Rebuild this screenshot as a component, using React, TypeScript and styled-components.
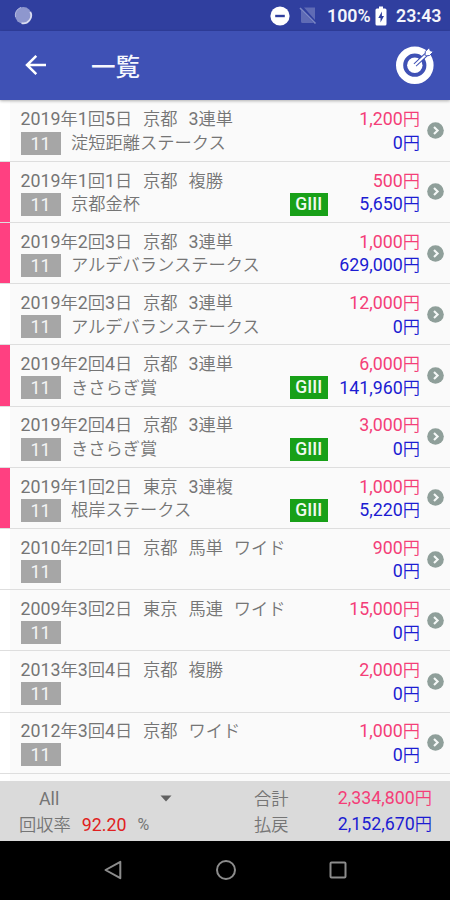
import React from 'react';
import styled, { createGlobalStyle } from 'styled-components';

const GlobalStyle = createGlobalStyle`
  * { box-sizing: border-box; }
  body { margin: 0; background: #000; }
`;

const Screen = styled.div`
  width: 450px;
  height: 900px;
  overflow: hidden;
  display: flex;
  flex-direction: column;
  background: #fafafa;
  font-family: Roboto, 'Noto Sans CJK JP', sans-serif;
  font-size: 17.8px;
  color: #757575;
`;

const StatusBar = styled.header`
  height: 30.5px;
  flex: none;
  display: flex;
  align-items: center;
  padding: 1px 10px 0 14px;
  background: #303f9f;
  color: #f4f5fb;
  font-size: 17.8px;
  font-weight: 600;
`;

const StatusIcons = styled.div`
  margin-left: auto;
  display: flex;
  align-items: center;
`;

const StatusText = styled.span<{ $width: number; $gap: number }>`
  width: ${(p) => p.$width}px;
  margin-left: ${(p) => p.$gap}px;
  white-space: nowrap;
`;

const Icon = styled.svg<{ $gap?: number }>`
  display: block;
  flex: none;
  margin-left: ${(p) => p.$gap ?? 0}px;
`;

const AppBar = styled.div`
  height: 69.7px;
  flex: none;
  display: flex;
  align-items: center;
  padding: 0 14px 0 25px;
  background: #3f51b5;
  box-shadow: 0 1px 3px rgba(0, 0, 0, 0.3);
  z-index: 1;
`;

const Title = styled.h1`
  margin: 0 auto 0 44px;
  padding-top: 5px;
  font-size: 24.5px;
  font-weight: 500;
  line-height: 30px;
  color: #f6f7fd;
`;

const List = styled.ul`
  flex: 1;
  min-height: 0;
  margin: 0;
  padding: 0.5px 0 0;
  list-style: none;
  overflow: hidden;
`;

const Row = styled.li`
  height: 61.2px;
  display: flex;
  align-items: center;
  padding-right: 6px;
  border-bottom: 1.5px solid #dedede;
`;

const HitMark = styled.span<{ $hit: boolean }>`
  width: 10px;
  flex: none;
  align-self: stretch;
  background: ${(p) => (p.$hit ? '#ff4081' : '#ffffff')};
`;

const Race = styled.div`
  flex: 1;
  padding: 7px 0 0 10.5px;
  align-self: stretch;
`;

const Line = styled.div`
  height: 23.6px;
  display: flex;
  align-items: center;
  white-space: pre;
  line-height: 23px;
`;

const Words = styled.span`
  display: flex;
  gap: 10.8px;
`;

const Kanji = styled.span`
  font-size: 17.25px;
  font-weight: 350;
`;

const RaceNumber = styled.span`
  width: 40px;
  height: 23px;
  margin-right: 10.5px;
  display: flex;
  align-items: center;
  justify-content: center;
  background: #a6a6a6;
  color: #f4f4f4;
`;

const Grade = styled.span`
  width: 37.5px;
  height: 23px;
  margin-left: auto;
  display: flex;
  align-items: center;
  justify-content: center;
  background: #18a018;
  color: #f0faf0;
  font-weight: 500;
  font-size: 17.5px;
`;

const Amounts = styled.div`
  width: 92.5px;
  padding-top: 7px;
  align-self: stretch;
`;

const Amount = styled(Line)<{ $kind: 'bet' | 'payout' }>`
  justify-content: flex-end;
  color: ${(p) => (p.$kind === 'bet' ? '#f43e78' : '#1c1cd2')};
`;

const Footer = styled.footer`
  height: 59.7px;
  flex: none;
  display: grid;
  grid-template-columns: 235px 54px 124px;
  grid-template-rows: 26px 26px;
  align-content: start;
  align-items: center;
  padding: 4px 18px 0 19px;
  background: #dadada;
`;

const Picker = styled.div`
  display: flex;
  align-items: center;
  justify-content: space-between;
  padding: 2px 82px 0 20px;
`;

const Rate = styled.div`
  display: flex;
  align-items: center;
  padding-top: 3px;
  line-height: 24px;
`;

const RateValue = styled.span`
  margin: 0 11px 0 11px;
  color: #e02020;
`;

const RateUnit = styled.span`
  font-size: 16px;
`;

const NavBar = styled.nav`
  height: 59.5px;
  flex: none;
  display: flex;
  align-items: center;
  justify-content: space-between;
  padding: 0 102px 0 103px;
  background: #000;
`;

interface Entry {
  words: string[];
  name?: string;
  grade?: boolean;
  hit?: boolean;
  bet: string;
  payout: string;
}

const entries: Entry[] = [
  { words: ['2019年1回5日', '京都', '3連単'], name: '淀短距離ステークス', bet: '1,200円', payout: '0円' },
  { words: ['2019年1回1日', '京都', '複勝'], name: '京都金杯', grade: true, hit: true, bet: '500円', payout: '5,650円' },
  { words: ['2019年2回3日', '京都', '3連単'], name: 'アルデバランステークス', hit: true, bet: '1,000円', payout: '629,000円' },
  { words: ['2019年2回3日', '京都', '3連単'], name: 'アルデバランステークス', bet: '12,000円', payout: '0円' },
  { words: ['2019年2回4日', '京都', '3連単'], name: 'きさらぎ賞', grade: true, hit: true, bet: '6,000円', payout: '141,960円' },
  { words: ['2019年2回4日', '京都', '3連単'], name: 'きさらぎ賞', grade: true, bet: '3,000円', payout: '0円' },
  { words: ['2019年1回2日', '東京', '3連複'], name: '根岸ステークス', grade: true, hit: true, bet: '1,000円', payout: '5,220円' },
  { words: ['2010年2回1日', '京都', '馬単', 'ワイド'], bet: '900円', payout: '0円' },
  { words: ['2009年3回2日', '東京', '馬連', 'ワイド'], bet: '15,000円', payout: '0円' },
  { words: ['2013年3回4日', '京都', '複勝'], bet: '2,000円', payout: '0円' },
  { words: ['2012年3回4日', '京都', 'ワイド'], bet: '1,000円', payout: '0円' },
];

/* Sets Japanese runs slightly smaller than the digits beside them. */
function Mixed({ text }: { text: string }) {
  const runs = text.match(/[\d,.]+|[^\d,.]+/g) ?? [];
  return (
    <span>
      {runs.map((run, i) => (/^\d/.test(run) ? run : <Kanji key={i}>{run}</Kanji>))}
    </span>
  );
}

function Chevron() {
  return (
    <Icon $gap={7} width="17" height="17" viewBox="0 0 17 17">
      <circle cx="8.5" cy="8.5" r="8.3" fill="#8f9f9a" />
      <path d="M7 5l3.6 3.5L7 12" fill="none" stroke="#f5f8f7" strokeWidth="2.1" />
    </Icon>
  );
}

function TargetIcon() {
  return (
    <Icon width="40" height="40" viewBox="0 0 40 40">
      <circle cx="18.800" cy="20.2" r="15.2" fill="none" stroke="#fff" strokeWidth="7.2" />
      <circle cx="18.800" cy="20.2" r="7.7" fill="#fff" />
      <path d="M19 20L30 9.800" stroke="#3f51b5" strokeWidth="4.200" />
      <path d="M19 20L33 7" stroke="#fff" strokeWidth="2.2" strokeLinecap="round" />
      <path
        d="M29 10.200l.400-3.800 4-4 .8 3.300 3.300.800-4 4-3.800.400z"
        fill="#fff"
        stroke="#3f51b5"
        strokeWidth="1"
      />
    </Icon>
  );
}

export default function App() {
  return (
    <Screen>
      <GlobalStyle />
      <StatusBar>
        <Icon width="19" height="19" viewBox="0 0 19 19">
          <circle cx="9.3" cy="9.3" r="8.3" fill="#8e97ce" />
          <path d="M16.3 5.8A8 8 0 0 1 7.5 17.2" fill="none" stroke="#d9dcf0" strokeWidth="1.8" />
          <path d="M7 1.5A8 8 0 0 0 1.5 11" fill="none" stroke="#b2b9df" strokeWidth="1" />
        </Icon>
        <StatusIcons>
          <Icon width="20" height="20" viewBox="0 0 20 20">
            <circle cx="10" cy="10" r="9.6" fill="#fff" />
            <path d="M5.2 10h9.6" stroke="#303f9f" strokeWidth="2.4" />
          </Icon>
          <Icon $gap={9} width="18" height="19" viewBox="0 0 18 19">
            <path d="M5 1.500H16v12.500zM2 4L14.500 17H3.500Q2 17 2 15.500z" fill="#5f6bb5" />
            <path d="M1 2l15.5 15.5" stroke="#7c87c4" strokeWidth="1.6" />
          </Icon>
          <StatusText $width={42} $gap={10}>100%</StatusText>
          <Icon $gap={6} width="12" height="20" viewBox="0 0 12 20">
            <path d="M4 0.5h4v2h2q1.5 0 1.5 1.5v14q0 1.5-1.5 1.5H2Q.5 19.500.5 18V4Q.5 2.500 2 2.500h2z" fill="#fff" />
            <path d="M6.900 5.500L3.300 12h2.200v4.500L9 10H6.900z" fill="#303f9f" />
          </Icon>
          <StatusText $width={44} $gap={9}>23:43</StatusText>
        </StatusIcons>
      </StatusBar>
      <AppBar>
        <Icon width="22" height="22" viewBox="0 0 22 22">
          <path d="M21 11H2.500M11.300 1.800L2 11l9.300 9.200" fill="none" stroke="#fff" strokeWidth="2.500" />
        </Icon>
        <Title>一覧</Title>
        <TargetIcon />
      </AppBar>
      <List>
        {entries.map((entry, i) => (
          <Row key={i}>
            <HitMark $hit={!!entry.hit} />
            <Race>
              <Line>
                <Words>
                  {entry.words.map((word) => (
                    <Mixed key={word} text={word} />
                  ))}
                </Words>
              </Line>
              <Line>
                <RaceNumber>11</RaceNumber>
                {entry.name && <Mixed text={entry.name} />}
                {entry.grade && <Grade>GIII</Grade>}
              </Line>
            </Race>
            <Amounts>
              <Amount $kind="bet"><Mixed text={entry.bet} /></Amount>
              <Amount $kind="payout"><Mixed text={entry.payout} /></Amount>
            </Amounts>
            <Chevron />
          </Row>
        ))}
        <Row>
          <HitMark $hit={false} />
        </Row>
      </List>
      <Footer>
        <Picker>
          <span>All</span>
          <Icon width="12" height="7" viewBox="0 0 12 7">
            <path d="M.5.500h11L6 6.500z" fill="#606060" />
          </Icon>
        </Picker>
        <Kanji>合計</Kanji>
        <Amount $kind="bet"><Mixed text="2,334,800円" /></Amount>
        <Rate>
          <Kanji>回収率</Kanji>
          <RateValue>92.20</RateValue>
          <RateUnit>%</RateUnit>
        </Rate>
        <Kanji>払戻</Kanji>
        <Amount $kind="payout"><Mixed text="2,152,670円" /></Amount>
      </Footer>
      <NavBar>
        <Icon width="20" height="20" viewBox="0 0 20 20">
          <path d="M17.300 1.800v16.400L2.500 10z" fill="none" stroke="#8c8c8c" strokeWidth="2" strokeLinejoin="round" />
        </Icon>
        <Icon width="22" height="22" viewBox="0 0 22 22">
          <circle cx="11" cy="11" r="9" fill="none" stroke="#8c8c8c" strokeWidth="2" />
        </Icon>
        <Icon width="20" height="20" viewBox="0 0 20 20">
          <rect x="2.500" y="2.500" width="15" height="15" rx="1" fill="none" stroke="#8c8c8c" strokeWidth="2" />
        </Icon>
      </NavBar>
    </Screen>
  );
}
